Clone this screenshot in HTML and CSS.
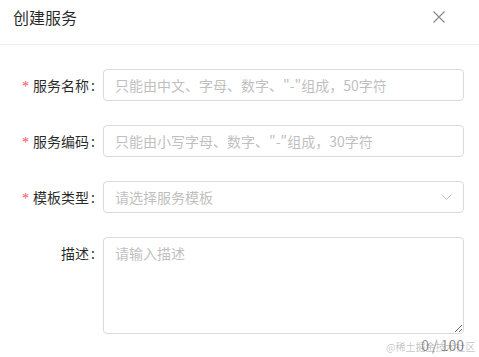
FILE: index.html
```html
<!DOCTYPE html>
<html lang="zh-CN">
<head>
  <meta charset="UTF-8">
  <title>创建服务</title>
  <link rel="stylesheet" href="styles.css">
</head>
<body>
  <div class="modal">
    <div class="modal-header">
      <div class="modal-title">创建服务</div>
      <span class="modal-close">
        <svg width="12" height="12" viewBox="0 0 12 12"><path d="M0.5 0.5 L11.5 11.5 M11.5 0.5 L0.5 11.5" stroke="#8c8c8c" stroke-width="1.2" fill="none"/></svg>
      </span>
    </div>
    <form class="modal-body">
      <div class="form-row">
        <label class="form-label required">服务名称</label>
        <input class="form-input" type="text" placeholder="只能由中文、字母、数字、&quot;-&quot;组成，50字符">
      </div>
      <div class="form-row">
        <label class="form-label required">服务编码</label>
        <input class="form-input" type="text" placeholder="只能由小写字母、数字、&quot;-&quot;组成，30字符">
      </div>
      <div class="form-row">
        <label class="form-label required">模板类型</label>
        <div class="form-select">
          <span class="select-placeholder">请选择服务模板</span>
          <svg class="select-arrow" width="11" height="6" viewBox="0 0 11 6"><path d="M0.5 0.5 L5.5 5.5 L10.5 0.5" stroke="#bfbfbf" stroke-width="1" fill="none"/></svg>
        </div>
      </div>
      <div class="form-row last">
        <label class="form-label">描述</label>
        <div class="textarea-wrap">
          <textarea class="form-textarea" placeholder="请输入描述"></textarea>
          <div class="textarea-count">0 / 100</div>
        </div>
      </div>
    </form>
  </div>
  <div class="watermark">@稀土掘金技术社区</div>
</body>
</html>
```

FILE: styles.css
```css
body {
  margin: 0;
  background: #fff;
  font-family: "Noto Sans CJK SC", "Noto Sans", sans-serif;
  font-size: 14px;
  color: rgba(0, 0, 0, 0.85);
}

.modal {
  width: 479px;
}

.modal-header {
  display: flex;
  justify-content: space-between;
  align-items: flex-start;
  height: 45px;
  box-sizing: border-box;
  padding: 5px 34px 0 13px;
  border-bottom: 1px solid #f0f0f0;
}

.modal-title {
  font-size: 16px;
  line-height: 24px;
}

.modal-close {
  display: flex;
  margin-top: 6px;
}

.modal-body {
  padding: 24px 15px 0 0;
  margin: 0;
}

.form-row {
  display: grid;
  grid-template-columns: 103px 1fr;
  margin-bottom: 24px;
}

.form-row.last {
  margin-bottom: 0;
}

.form-label {
  display: flex;
  justify-content: flex-end;
  align-items: center;
  height: 32px;
  line-height: 22px;
}

.form-label::after {
  content: ":";
  margin: 0 8px 0 2px;
}

.form-label.required::before {
  content: "*";
  color: #ff4d4f;
  font-family: "Liberation Serif", serif;
  margin-right: 4px;
  margin-top: 3px;
}

.form-input,
.form-select,
.form-textarea {
  box-sizing: border-box;
  width: 100%;
  border: 1px solid #d9d9d9;
  border-radius: 4px;
  padding: 4px 11px;
  font-family: inherit;
  font-size: 14px;
  line-height: 22px;
  color: rgba(0, 0, 0, 0.85);
  background: #fff;
  margin: 0;
}

.form-input {
  height: 32px;
}

.form-input::placeholder,
.form-textarea::placeholder,
.select-placeholder {
  color: #bfbfbf;
}

.form-select {
  display: flex;
  align-items: center;
  justify-content: space-between;
  height: 32px;
}

.textarea-wrap {
  display: flex;
  flex-direction: column;
}

.form-textarea {
  height: 97px;
  resize: vertical;
  display: block;
}

.textarea-count {
  align-self: flex-end;
  line-height: 22px;
  color: rgba(0, 0, 0, 0.45);
}

.watermark {
  position: absolute;
  left: 386px;
  top: 340px;
  white-space: nowrap;
  font-family: "Noto Sans CJK SC", sans-serif;
  font-size: 10px;
  line-height: 14px;
  color: rgba(0, 0, 0, 0.25);
}
```
